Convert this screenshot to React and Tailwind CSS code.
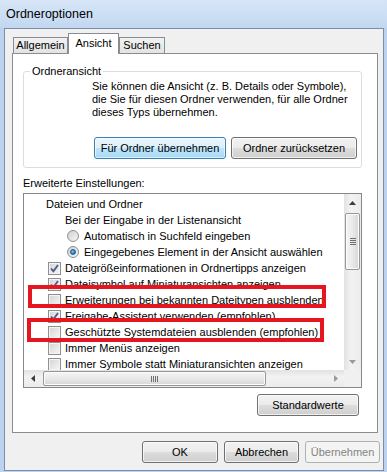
import React from 'react';

const btn =
  'h-[22px] rounded-[3px] border border-[#707070] bg-[linear-gradient(#f2f2f2_0%,#ebebeb_49%,#dddddd_50%,#cfcfcf_100%)] shadow-[inset_0_0_0_1px_rgba(255,255,255,0.7)] text-[11px] text-black flex items-center justify-center';

const CheckBox = ({ checked }) => (
  <span className="w-[13px] h-[13px] shrink-0 border border-[#8e8f8f] bg-[linear-gradient(135deg,#d4d4d4,#f6f6f6)] shadow-[inset_0_0_0_1px_#f4f4f4] flex items-center justify-center">
    {checked && (
      <svg width="9" height="9" viewBox="0 0 9 9">
        <path d="M1 4.5 L3.4 7.2 L8 1" fill="none" stroke="#4a5b8c" strokeWidth="1.8" />
      </svg>
    )}
  </span>
);

const Radio = ({ checked }) => (
  <span className="w-[12px] h-[12px] shrink-0 rounded-full border border-[#8e8f8f] bg-[linear-gradient(135deg,#cfcfcf,#f8f8f8)] flex items-center justify-center">
    {checked && (
      <span className="w-[6px] h-[6px] rounded-full bg-[radial-gradient(circle_at_40%_40%,#8ccaf0,#1d6db1_70%)] border border-[#1b5f9a]" />
    )}
  </span>
);

const Row = ({ children, className = '' }) => (
  <div className={`h-[16px] flex items-center whitespace-nowrap ${className}`}>{children}</div>
);

const Arrow = ({ dir }) => {
  const paths = {
    up: 'M0 4 L3.5 0 L7 4 Z',
    down: 'M0 0 L7 0 L3.5 4 Z',
    left: 'M4 0 L4 7 L0 3.5 Z',
    right: 'M0 0 L0 7 L4 3.5 Z',
  };
  const vertical = dir === 'up' || dir === 'down';
  return (
    <svg width={vertical ? 7 : 4} height={vertical ? 4 : 7} viewBox={vertical ? '0 0 7 4' : '0 0 4 7'}>
      <path d={paths[dir]} fill={dir === 'up' || dir === 'left' ? '#3c3c3c' : '#9a9a9a'} />
    </svg>
  );
};

export default function App() {
  return (
    <div className="w-[387px] h-[472px] overflow-hidden bg-[#bcd2ee] flex flex-col font-['Liberation_Sans',Arial,sans-serif] text-black">
      {/* Title bar */}
      <div className="h-[28px] shrink-0 pl-[6px] flex items-center text-[12.5px] bg-[linear-gradient(to_bottom,#d6e6f7,#c2d7f0)]">
        Ordneroptionen
      </div>

      {/* Dialog body */}
      <div className="ml-[4px] w-[380px] h-[443px] border border-[#7b8da7] bg-[#f0f0f0] flex flex-col">
        {/* Tabs */}
        <div className="mt-[4px] ml-[8px] h-[20px] flex items-end text-[11px]">
          <div className="w-[55px] h-[16px] border border-b-0 border-[#898c95] bg-[linear-gradient(#f2f2f2,#e3e3e3)] flex items-center justify-center">
            Allgemein
          </div>
          <div className="w-[51px] h-[21px] -mb-[1px] relative z-10 border border-b-0 border-[#898c95] bg-white flex items-center justify-center pb-[2px]">
            Ansicht
          </div>
          <div className="w-[46px] h-[16px] border border-b-0 border-[#898c95] bg-[linear-gradient(#f2f2f2,#e3e3e3)] flex items-center justify-center">
            Suchen
          </div>
        </div>

        {/* Tab panel */}
        <div className="ml-[7px] w-[366px] h-[380px] border border-[#898c95] bg-white flex flex-col text-[11px]">
          {/* Ordneransicht */}
          <fieldset className="mt-[10px] ml-[10px] w-[339px] border border-[#d5dfe5] rounded-[3px] pb-[8px]">
            <legend className="ml-[6px] px-[2px] leading-[14px]">Ordneransicht</legend>
            <div className="pt-[2px] pl-[68px] leading-[13px]">
              <div>Sie können die Ansicht (z. B. Details oder Symbole),</div>
              <div>die Sie für diesen Ordner verwenden, für alle Ordner</div>
              <div>dieses Typs übernehmen.</div>
            </div>
            <div className="mt-[18px] pr-[4px] flex justify-end gap-[5px]">
              <button className="w-[132px] h-[22px] rounded-[3px] border border-[#3c7fb1] bg-[linear-gradient(#eaf6fd_0%,#d9f0fc_49%,#bee6fd_50%,#a7d9f5_100%)] shadow-[inset_0_0_0_1px_rgba(255,255,255,0.6)] text-[11px] flex items-center justify-center">
                Für Ordner übernehmen
              </button>
              <button className={`w-[126px] ${btn}`}>Ordner zurücksetzen</button>
            </div>
          </fieldset>

          <div className="mt-[8px] ml-[10px] leading-[14px]">Erweiterte Einstellungen:</div>

          {/* List box */}
          <div className="mt-[3px] ml-[10px] w-[339px] h-[195px] border border-[#828790] relative grid grid-cols-[320px_17px] grid-rows-[176px_17px]">
            <div className="overflow-hidden pt-[2px]">
              <Row className="pl-[22px]">Dateien und Ordner</Row>
              <Row className="pl-[41px]">Bei der Eingabe in der Listenansicht</Row>
              <Row className="pl-[43px] gap-[5px]">
                <Radio />
                Automatisch in Suchfeld eingeben
              </Row>
              <Row className="pl-[43px] gap-[5px]">
                <Radio checked />
                Eingegebenes Element in der Ansicht auswählen
              </Row>
              <Row className="pl-[24px] gap-[4px]">
                <CheckBox checked />
                Dateigrößeinformationen in Ordnertipps anzeigen
              </Row>
              <Row className="pl-[24px] gap-[4px]">
                <CheckBox checked />
                Dateisymbol auf Miniaturansichten anzeigen
              </Row>
              <Row className="pl-[24px] gap-[4px]">
                <CheckBox />
                Erweiterungen bei bekannten Dateitypen ausblenden
              </Row>
              <Row className="pl-[24px] gap-[4px]">
                <CheckBox checked />
                Freigabe-Assistent verwenden (empfohlen)
              </Row>
              <Row className="pl-[24px] gap-[4px]">
                <CheckBox />
                Geschützte Systemdateien ausblenden (empfohlen)
              </Row>
              <Row className="pl-[24px] gap-[4px]">
                <CheckBox />
                Immer Menüs anzeigen
              </Row>
              <Row className="pl-[24px] gap-[4px]">
                <CheckBox />
                Immer Symbole statt Miniaturansichten anzeigen
              </Row>
            </div>

            {/* Vertical scrollbar */}
            <div className="bg-[linear-gradient(to_right,#e2e2e2,#f2f2f2_40%,#ececec)] flex flex-col items-center">
              <div className="h-[17px] flex items-center justify-center">
                <Arrow dir="up" />
              </div>
              <div className="mt-[2px] w-[15px] h-[57px] rounded-[2px] border border-[#979797] bg-[linear-gradient(to_right,#f5f5f5,#e9e9e9_50%,#d6d6d6)] shadow-[inset_0_0_0_1px_#fbfbfb] flex flex-col items-center justify-center gap-[1px]">
                <span className="w-[6px] h-[1px] bg-[#6f6f6f]" />
                <span className="w-[6px] h-[1px] bg-[#6f6f6f]" />
                <span className="w-[6px] h-[1px] bg-[#6f6f6f]" />
                <span className="w-[6px] h-[1px] bg-[#6f6f6f]" />
              </div>
              <div className="flex-1" />
              <div className="h-[17px] flex items-center justify-center">
                <Arrow dir="down" />
              </div>
            </div>

            {/* Horizontal scrollbar */}
            <div className="bg-[linear-gradient(to_bottom,#e2e2e2,#f2f2f2_40%,#ececec)] flex items-center">
              <div className="w-[17px] h-full flex items-center justify-center">
                <Arrow dir="left" />
              </div>
              <div className="ml-[2px] w-[223px] h-[15px] rounded-[2px] border border-[#979797] bg-[linear-gradient(to_bottom,#f5f5f5,#e9e9e9_50%,#d6d6d6)] shadow-[inset_0_0_0_1px_#fbfbfb] flex items-center justify-center gap-[1px]">
                <span className="w-[1px] h-[6px] bg-[#6f6f6f]" />
                <span className="w-[1px] h-[6px] bg-[#6f6f6f]" />
                <span className="w-[1px] h-[6px] bg-[#6f6f6f]" />
                <span className="w-[1px] h-[6px] bg-[#6f6f6f]" />
              </div>
              <div className="flex-1" />
              <div className="w-[17px] h-full flex items-center justify-center">
                <Arrow dir="right" />
              </div>
            </div>
            <div className="bg-[#f0f0f0]" />

            {/* Red highlight boxes */}
            <div className="absolute left-[4px] top-[91px] w-[298px] h-[23px] border-[4px] border-[#e5161f] pointer-events-none" />
            <div className="absolute left-[3px] top-[124px] w-[297px] h-[24px] border-[4px] border-[#e5161f] pointer-events-none" />
          </div>

          <div className="mt-[6px] mr-[18px] self-end">
            <button className={`w-[102px] ${btn}`}>Standardwerte</button>
          </div>
        </div>

        {/* Dialog buttons */}
        <div className="mt-[8px] mr-[3px] flex justify-end gap-[6px]">
          <button className={`w-[76px] ${btn}`}>OK</button>
          <button className={`w-[75px] ${btn}`}>Abbrechen</button>
          <button className="w-[75px] h-[22px] rounded-[3px] border border-[#adb2b5] bg-[#f4f4f4] text-[11px] text-[#838383] flex items-center justify-center">
            Übernehmen
          </button>
        </div>
      </div>
    </div>
  );
}
